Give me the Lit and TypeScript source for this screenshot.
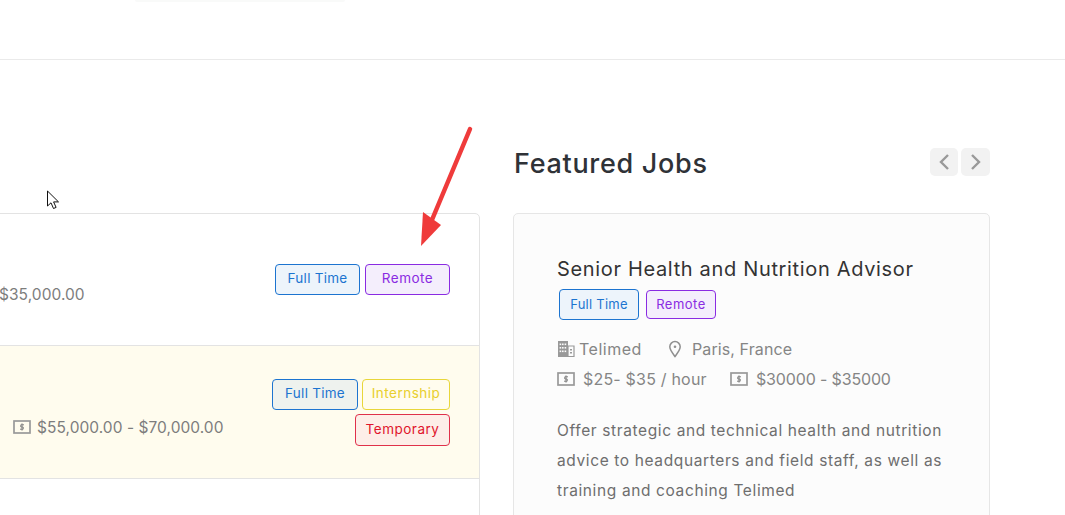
import { LitElement, html, css } from "lit";
import { customElement } from "lit/decorators.js";

const money = () => html`<svg class="ic" width="18" height="14" viewBox="0 0 18 14" fill="none"><rect x="1" y="1" width="16" height="12" stroke="#999" stroke-width="1.700"/><path d="M11 4.800H7.800V7h2.400v2.200H7M9 3.400v7.200" stroke="#808080" stroke-width="1"/></svg>`;

const building = html`<svg class="ic" width="18" height="16" viewBox="0 0 18 16" fill="#999"><path d="M1 0h10v16H1z"/><path d="M11 5h6v10.500h-6z" fill="none" stroke="#999" stroke-width="1.200"/><g fill="#fcfcfc"><rect x="2.600" y="2.500" width="1.600" height="1.600"/><rect x="5" y="2.500" width="1.600" height="1.600"/><rect x="7.600" y="2.500" width="1.600" height="1.600"/><rect x="2.600" y="6" width="1.600" height="1.600"/><rect x="5" y="6" width="1.600" height="1.600"/><rect x="7.600" y="6" width="1.600" height="1.600"/><rect x="2.600" y="9.500" width="1.600" height="1.600"/><rect x="5" y="9.500" width="1.600" height="1.600"/><rect x="7.600" y="9.500" width="1.600" height="1.600"/></g><rect x="13" y="8" width="2" height="1.500"/><rect x="13" y="11" width="2" height="1.500"/></svg>`;

const pin = html`<svg class="ic" width="14" height="18" viewBox="0 0 14 18" fill="none" stroke="#8f8f8f" stroke-width="1.500"><path d="M7 16.500C4 12.500 1.800 9.800 1.800 6.800a5.200 5.200 0 0 1 10.400 0c0 3-2.200 5.700-5.200 9.700z"/><circle cx="7" cy="6.800" r="1.300" fill="#8f8f8f" stroke="none"/></svg>`;

@customElement("app-root")
export class AppRoot extends LitElement {
  static styles = css`
    :host { display: block; width: 1065px; height: 515px; overflow: hidden; position: relative; background: #fff; font-family: Inter, "Open Sans", sans-serif; color: #7a7a7a; }
    * { box-sizing: border-box; }
    header { height: 60px; border-bottom: 1px solid #eaeaea; }
    .glow { position: absolute; left: 135px; top: 0; width: 210px; height: 2px; background: #f9faf9; border-radius: 0 0 4px 4px; }
    main { display: grid; grid-template-columns: 500px 476px; column-gap: 34px; margin-left: -20px; padding-top: 88px; }
    .head { height: 65px; }
    .list { border: 1px solid #e3e3e3; border-radius: 5px; height: 400px; }
    .row { display: flex; justify-content: space-between; border-bottom: 1px solid #e3e3e3; padding-right: 29px; }
    .row.a { height: 132px; }
    .row.b { height: 133px; background: #fffcee; }
    .pay { display: flex; font-size: 15.500px; color: #7d7d7d; white-space: nowrap; letter-spacing: .05px; height: 100%; align-items: flex-start; }
    .a .pay { padding: 71px 0 0 18px; }
    .b .pay { padding: 72px 0 0 32px; gap: 6px; }
    .b .pay .ic { margin-top: 2px; }
    .tags { display: flex; flex-wrap: wrap; justify-content: flex-end; align-content: flex-start; gap: 4px 5px; }
    .a .tags { padding-top: 50px; }
    .b .tags { padding-top: 33px; width: 180px; column-gap: 4px; }
    .tag { display: flex; align-items: center; justify-content: center; height: 31px; padding-bottom: 3px; border: 1px solid; border-radius: 4px; font-size: 13.500px; font-weight: 400; letter-spacing: .5px; white-space: nowrap; }
    .ft { width: 85px; color: #1c74d0; border-color: #1c74d0; background: #edf4fb; letter-spacing: .25px; }
    .b .ft { width: 86px; background: #eef2ee; }
    .rm { width: 85px; color: #8a2be2; border-color: #8a2be2; background: #f4eefc; }
    .in { width: 88px; color: #e8cf2c; border-color: #e8d63a; }
    .tp { width: 95px; height: 32px; color: #e0142c; border-color: #e0304a; background: #fdeee8; }
    .fhead { height: 65px; display: flex; justify-content: space-between; }
    h2 { margin: 0; font-size: 27px; font-weight: 500; letter-spacing: .7px; color: #2f3237; line-height: 32px; }
    .nav { display: flex; gap: 3px; }
    .nav div { width: 28px; height: 28px; border-radius: 5px; background: #f2f2f2; display: flex; align-items: center; justify-content: center; }
    .nav div + div { width: 29px; }
    .card { border: 1px solid #e6e6e6; border-radius: 5px; background: #fcfcfc; height: 400px; padding: 41px 42px 0; margin-left: -1px; }
    h3 { margin: 0; font-size: 20px; font-weight: 400; letter-spacing: .66px; color: #333; line-height: 28px; padding-left: 1px; }
    .ctags { display: flex; gap: 7px; align-items: center; margin: 6px 0 0 3px; }
    .ctags .tag { font-size: 13px; padding-bottom: 1px; }
    .ctags .ft { width: 80px; }
    .ctags .rm { width: 70px; height: 29px; }
    .meta { display: flex; align-items: center; height: 30px; font-size: 16px; color: #858585; white-space: nowrap; padding-left: 1px; }
    .meta.first { margin-top: 14px; }
    .ic { flex: none; }
    .m { display: flex; align-items: center; gap: 4px; }
    .c1 { width: 111px; letter-spacing: .5px; }
    .c2 { gap: 10px; letter-spacing: .1px; }
    .c3 { width: 173px; gap: 8px; letter-spacing: .2px; }
    .c4 { gap: 8px; letter-spacing: -.15px; }
    .p { margin: 22px 0 0; padding-left: 1px; font-size: 15.500px; line-height: 30px; letter-spacing: .62px; color: #6e6e6e; white-space: nowrap; }
    .over { position: absolute; pointer-events: none; }
    .arrow { left: 415px; top: 125px; }
    .cursor { left: 46px; top: 190px; }
  `;

  render() {
    return html`
      <header></header>
      <div class="glow"></div>
      <main>
        <section>
          <div class="head"></div>
          <div class="list">
            <div class="row a">
              <div class="pay">$35,000.00</div>
              <div class="tags"><div class="tag ft">Full Time</div><div class="tag rm">Remote</div></div>
            </div>
            <div class="row b">
              <div class="pay">${money()}<span>$55,000.00 - $70,000.00</span></div>
              <div class="tags"><div class="tag ft">Full Time</div><div class="tag in">Internship</div><div class="tag tp">Temporary</div></div>
            </div>
          </div>
        </section>
        <section>
          <div class="fhead">
            <h2>Featured Jobs</h2>
            <div class="nav">
              <div><svg width="14" height="18" viewBox="0 0 14 18" fill="none" stroke="#999" stroke-width="2.400"><path d="M11 2 4 9l7 7"/></svg></div>
              <div><svg width="14" height="18" viewBox="0 0 14 18" fill="none" stroke="#999" stroke-width="2.400"><path d="m3 2 7 7-7 7"/></svg></div>
            </div>
          </div>
          <div class="card">
            <h3>Senior Health and Nutrition Advisor</h3>
            <div class="ctags"><div class="tag ft">Full Time</div><div class="tag rm">Remote</div></div>
            <div class="meta first"><span class="m c1">${building}<span>Telimed</span></span><span class="m c2">${pin}<span>Paris, France</span></span></div>
            <div class="meta"><span class="m c3">${money()}<span>$25- $35 / hour</span></span><span class="m c4">${money()}<span>$30000 - $35000</span></span></div>
            <p class="p">Offer strategic and technical health and nutrition<br>advice to headquarters and field staff, as well as<br>training and coaching Telimed</p>
          </div>
        </section>
      </main>
      <svg class="over arrow" width="60" height="125" viewBox="0 0 60 125" fill="none">
        <path d="M55 4 16.500 96" stroke="#ef3b3b" stroke-width="4.500" stroke-linecap="round"/>
        <path d="M6 121 8 87 26 100z" fill="#ef3b3b"/>
      </svg>
      <svg class="over cursor" width="14" height="20" viewBox="0 0 14 20"><path d="M1.500 1v15l3.500-3.200 2.500 5.700 2.600-1.100-2.500-5.500h4.900z" fill="#fff" stroke="#111" stroke-width="1"/></svg>
    `;
  }
}
